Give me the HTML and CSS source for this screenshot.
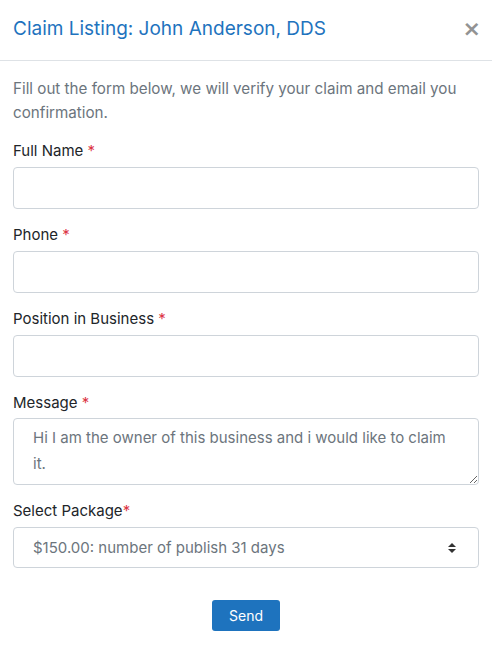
FILE: index.html
```html
<!DOCTYPE html>
<html lang="en">
<head>
<meta charset="utf-8">
<title>Claim Listing</title>
<link rel="stylesheet" href="styles.css">
</head>
<body>
<div class="modal">
  <div class="modal-header">
    <h5 class="modal-title">Claim Listing: John Anderson, DDS</h5>
    <button class="close" type="button" aria-label="Close">×</button>
  </div>
  <div class="modal-body">
    <p class="intro">Fill out the form below, we will verify your claim and email you confirmation.</p>
    <form class="form">
      <div class="form-group">
        <label class="label">Full Name <span class="req">*</span></label>
        <input class="control" type="text">
      </div>
      <div class="form-group">
        <label class="label">Phone <span class="req">*</span></label>
        <input class="control" type="text">
      </div>
      <div class="form-group">
        <label class="label">Position in Business <span class="req">*</span></label>
        <input class="control" type="text">
      </div>
      <div class="form-group">
        <label class="label">Message <span class="req">*</span></label>
        <textarea class="control textarea">Hi I am the owner of this business and i would like to claim it.</textarea>
      </div>
      <div class="form-group">
        <label class="label">Select Package<span class="req">*</span></label>
        <div class="select">
          <span class="select-value">$150.00: number of publish 31 days</span>
          <svg class="select-arrows" width="10" height="12" viewBox="0 0 10 12"><path d="M5 1 L9 5 H1 Z M5 11 L9 7 H1 Z" fill="#333"/></svg>
        </div>
      </div>
      <div class="actions">
        <button class="btn" type="button">Send</button>
      </div>
    </form>
  </div>
</div>
</body>
</html>
```
FILE: styles.css
```css
* { box-sizing: border-box; }
html, body { margin: 0; padding: 0; background: #fff; }
body {
  font-family: Inter, "Noto Sans", "Liberation Sans", sans-serif;
  color: #212529;
  font-size: 16px;
  line-height: 24px;
}
.modal { width: 492px; }
.modal-header {
  height: 61px;
  border-bottom: 1px solid #dee2e6;
  display: flex;
  align-items: center;
  justify-content: space-between;
  padding: 0 11px 2px 13px;
}
.modal-title {
  margin: 0;
  font-size: 19px;
  font-weight: 400;
  line-height: 24px;
  color: #1e73be;
}
.close {
  border: 0;
  background: none;
  padding: 0;
  font-family: "DejaVu Sans", sans-serif;
  font-size: 22px;
  font-weight: 700;
  line-height: 1;
  color: #939393;
  cursor: pointer;
}
.modal-body { padding: 16px 13px 20px 13px; }
.intro {
  margin: 0 0 14px 0;
  color: #6c757d;
  font-size: 15.2px;
  line-height: 24px;
}
.form-group { margin-bottom: 14px; }
.label {
  display: block;
  margin-bottom: 4px;
  font-size: 15px;
  line-height: 24px;
}
.req { color: #dc3545; }
.control {
  display: block;
  width: 100%;
  height: 42px;
  border: 1px solid #ced4da;
  border-radius: 4px;
  background: #fff;
  font: inherit;
  font-size: 15px;
  color: #6c757d;
  padding: 8px 19px;
}
.textarea {
  height: 67px;
  margin-top: -1px;
  resize: vertical;
  line-height: 26px;
  padding: 6px 19px;
  overflow: hidden;
}
.select {
  display: flex;
  align-items: center;
  justify-content: space-between;
  height: 41px;
  border: 1px solid #ced4da;
  border-radius: 4px;
  padding: 0 21px 0 19px;
  color: #6c757d;
  font-size: 15px;
}
.actions {
  display: flex;
  justify-content: center;
  padding-top: 18px;
}
.btn {
  width: 68px;
  height: 31px;
  border: 0;
  border-radius: 3px;
  background: #1e73be;
  color: #fff;
  font: inherit;
  font-size: 14px;
  cursor: pointer;
}
```
